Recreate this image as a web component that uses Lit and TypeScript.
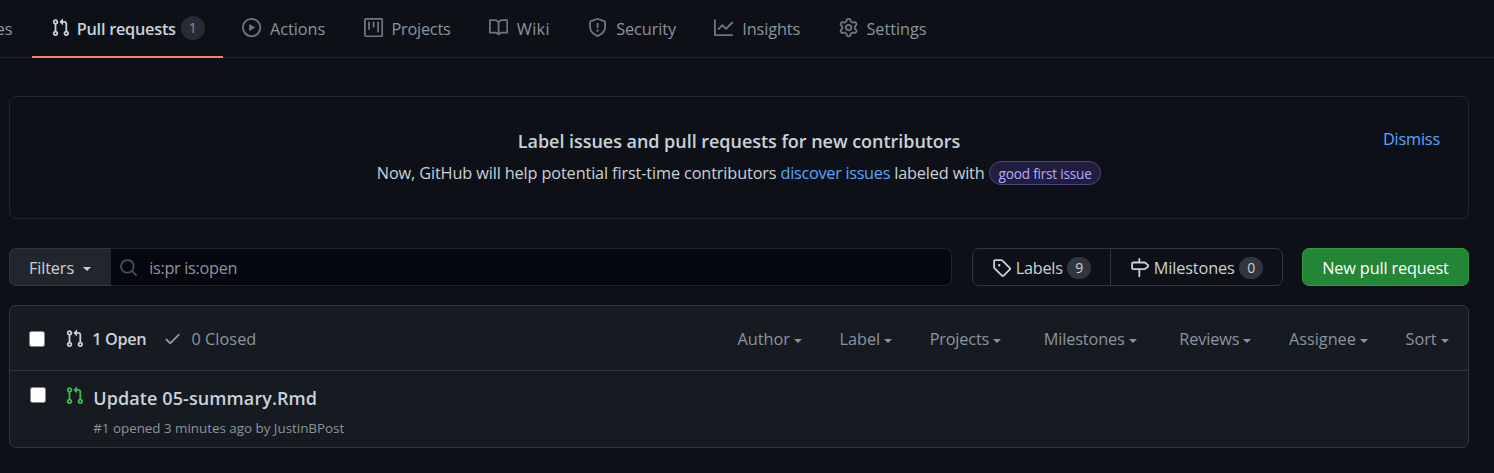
import { LitElement, html, css, svg } from "lit";
import { customElement, property } from "lit/decorators.js";

const ICONS: Record<string, string> = {
  pr: "M7.177 3.073L9.573.677A.25.25 0 0110 .854v4.792a.25.25 0 01-.427.177L7.177 3.427a.25.25 0 010-.354zM3.75 2.5a.75.75 0 100 1.5.75.75 0 000-1.5zm-2.25.75a2.25 2.25 0 113 2.122v5.256a2.251 2.251 0 11-1.5 0V5.372A2.25 2.25 0 011.5 3.25zM11 2.5h-1V4h1a1 1 0 011 1v5.628a2.251 2.251 0 101.5 0V5A2.5 2.5 0 0011 2.5zm1 10.25a.75.75 0 111.5 0 .75.75 0 01-1.5 0zM3.75 12a.75.75 0 100 1.5.75.75 0 000-1.5z",
  play: "M1.5 8a6.5 6.5 0 1113 0 6.5 6.5 0 01-13 0zM8 0a8 8 0 100 16A8 8 0 008 0zM6.379 5.227A.25.25 0 006 5.442v5.117a.25.25 0 00.379.214l4.264-2.559a.25.25 0 000-.428L6.379 5.227z",
  project: "M1.75 0A1.75 1.75 0 000 1.75v12.5C0 15.216.784 16 1.75 16h12.5A1.75 1.75 0 0016 14.25V1.75A1.75 1.75 0 0014.25 0H1.75zM1.5 1.75a.25.25 0 01.25-.25h12.5a.25.25 0 01.25.25v12.5a.25.25 0 01-.25.25H1.75a.25.25 0 01-.25-.25V1.75zM11.75 3a.75.75 0 00-.75.75v7.5a.75.75 0 001.5 0v-7.5a.75.75 0 00-.75-.75zm-8.25.75a.75.75 0 011.5 0v5.5a.75.75 0 01-1.5 0v-5.5zM8 3a.75.75 0 00-.75.75v3.5a.75.75 0 001.5 0v-3.5A.75.75 0 008 3z",
  book: "M0 1.75A.75.75 0 01.75 1h4.253c1.227 0 2.317.59 3 1.501A3.744 3.744 0 0111.006 1h4.245a.75.75 0 01.75.75v10.5a.75.75 0 01-.75.75h-4.507a2.25 2.25 0 00-1.591.659l-.622.621a.75.75 0 01-1.06 0l-.622-.621A2.25 2.25 0 005.258 13H.75a.75.75 0 01-.75-.75V1.75zm8.755 3a2.25 2.25 0 012.25-2.25H14.5v9h-3.757c-.71 0-1.4.201-1.992.572l.004-7.322zm-1.504 7.324l.004-5.073-.002-2.253A2.25 2.25 0 005.003 2.5H1.5v9h3.757a3.75 3.75 0 011.994.574z",
  shield: "M7.467.133a1.75 1.75 0 011.066 0l5.25 1.68A1.75 1.75 0 0115 3.48V7c0 1.566-.32 3.182-1.303 4.682-.983 1.498-2.585 2.813-5.032 3.855a1.7 1.7 0 01-1.33 0c-2.447-1.042-4.049-2.357-5.032-3.855C1.32 10.182 1 8.566 1 7V3.48a1.75 1.75 0 011.217-1.667l5.25-1.68zm.61 1.429a.25.25 0 00-.153 0l-5.25 1.68a.25.25 0 00-.174.238V7c0 1.358.275 2.666 1.057 3.86.784 1.194 2.121 2.34 4.366 3.297a.2.2 0 00.154 0c2.245-.956 3.582-2.104 4.366-3.298C13.225 9.666 13.5 8.36 13.5 7V3.48a.25.25 0 00-.174-.237l-5.25-1.68zM9 10.5a1 1 0 11-2 0 1 1 0 012 0zm-.25-5.75a.75.75 0 10-1.5 0v3a.75.75 0 001.5 0v-3z",
  graph: "M1.5 1.75a.75.75 0 00-1.5 0v12.5c0 .414.336.75.75.75h14.5a.75.75 0 000-1.5H1.5V1.75zm14.28 2.53a.75.75 0 00-1.06-1.06L10 7.94 7.53 5.47a.75.75 0 00-1.06 0L3.22 8.72a.75.75 0 001.06 1.06L7 7.06l2.47 2.47a.75.75 0 001.06 0l5.25-5.25z",
  gear: "M7.429 1.525a6.593 6.593 0 011.142 0c.036.003.108.036.137.146l.289 1.105c.147.56.55.967.997 1.189.174.086.341.183.501.29.417.278.97.423 1.53.27l1.102-.303c.11-.03.175.016.195.046.219.31.41.641.573.989.014.031.022.11-.059.19l-.815.806c-.411.406-.562.957-.53 1.456a4.588 4.588 0 010 .582c-.032.499.119 1.05.53 1.456l.815.806c.08.08.073.159.059.19a6.494 6.494 0 01-.573.99c-.02.029-.086.074-.195.045l-1.103-.303c-.559-.153-1.112-.008-1.529.27-.16.107-.327.204-.5.29-.449.222-.851.628-.998 1.189l-.289 1.105c-.029.11-.101.143-.137.146a6.613 6.613 0 01-1.142 0c-.036-.003-.108-.037-.137-.146l-.289-1.105c-.147-.56-.55-.967-.997-1.189a4.502 4.502 0 01-.501-.29c-.417-.278-.97-.423-1.53-.27l-1.102.303c-.11.03-.175-.016-.195-.046a6.492 6.492 0 01-.573-.989c-.014-.031-.022-.11.059-.19l.815-.806c.411-.406.562-.957.53-1.456a4.587 4.587 0 010-.582c.032-.499-.119-1.05-.53-1.456l-.815-.806c-.08-.08-.073-.159-.059-.19a6.44 6.44 0 01.573-.99c.02-.029.086-.075.195-.045l1.103.303c.559.153 1.112.008 1.529-.27.16-.107.327-.204.5-.29.449-.222.851-.628.998-1.189l.289-1.105c.029-.11.101-.143.137-.146zM8 0c-.236 0-.47.01-.701.03-.743.065-1.29.615-1.458 1.261l-.29 1.106c-.017.066-.078.158-.211.224a5.994 5.994 0 00-.668.386c-.123.082-.233.09-.3.071L3.27 2.776c-.644-.177-1.392.02-1.82.63a7.977 7.977 0 00-.704 1.217c-.315.675-.111 1.422.363 1.891l.815.806c.05.048.098.147.088.294a6.084 6.084 0 000 .772c.01.147-.038.246-.088.294l-.815.806c-.474.469-.678 1.216-.363 1.891.2.428.436.835.704 1.218.428.609 1.176.806 1.82.63l1.103-.303c.066-.019.176-.011.299.071.213.143.436.272.668.386.133.066.194.158.212.224l.289 1.106c.169.646.715 1.196 1.458 1.26a8.094 8.094 0 001.402 0c.743-.064 1.29-.614 1.458-1.26l.29-1.106c.017-.066.078-.158.211-.224a5.98 5.98 0 00.668-.386c.123-.082.233-.09.3-.071l1.102.302c.644.177 1.392-.02 1.82-.63.268-.382.505-.789.704-1.217.315-.675.111-1.422-.364-1.891l-.814-.806c-.05-.048-.098-.147-.088-.294a6.1 6.1 0 000-.772c-.01-.147.039-.246.088-.294l.814-.806c.475-.469.679-1.216.364-1.891a7.992 7.992 0 00-.704-1.218c-.428-.609-1.176-.806-1.82-.63l-1.103.303c-.066.019-.176.011-.299-.071a5.991 5.991 0 00-.668-.386c-.133-.066-.194-.158-.212-.224L10.16 1.29C9.99.645 9.444.095 8.701.031A8.094 8.094 0 008 0zm1.5 8a1.5 1.5 0 11-3 0 1.5 1.5 0 013 0zM11 8a3 3 0 11-6 0 3 3 0 016 0z",
  search: "M11.5 7a4.499 4.499 0 11-8.998 0A4.499 4.499 0 0111.5 7zm-.82 4.74a6 6 0 111.06-1.06l3.04 3.04a.75.75 0 11-1.06 1.06l-3.04-3.04z",
  tag: "M2.5 7.775V2.75a.25.25 0 01.25-.25h5.025a.25.25 0 01.177.073l6.25 6.25a.25.25 0 010 .354l-5.025 5.025a.25.25 0 01-.354 0l-6.25-6.25a.25.25 0 01-.073-.177zm-1.5 0V2.75C1 1.784 1.784 1 2.75 1h5.025c.464 0 .91.184 1.238.513l6.25 6.25a1.75 1.75 0 010 2.474l-5.026 5.026a1.75 1.75 0 01-2.474 0l-6.25-6.25A1.75 1.75 0 011 7.775zM6 5a1 1 0 100 2 1 1 0 000-2z",
  milestone: "M7.75 0a.75.75 0 01.75.75V3h3.634c.414 0 .814.147 1.13.414l2.07 1.75a1.75 1.75 0 010 2.672l-2.07 1.75a1.75 1.75 0 01-1.13.414H8.5v5.25a.75.75 0 11-1.5 0V10H2.75A1.75 1.75 0 011 8.25v-3.5C1 3.784 1.784 3 2.75 3H7V.75A.75.75 0 017.75 0zm0 8.5h4.384a.25.25 0 00.161-.06l2.07-1.75a.25.25 0 000-.38l-2.07-1.75a.25.25 0 00-.161-.06H2.75a.25.25 0 00-.25.25v3.5c0 .138.112.25.25.25h5z",
  check: "M13.78 4.22a.75.75 0 010 1.06l-7.25 7.25a.75.75 0 01-1.06 0L2.22 9.28a.75.75 0 011.06-1.06L6 10.94l6.72-6.72a.75.75 0 011.06 0z",
};

const icon = (name: string) => html`<svg class="icon" viewBox="0 0 16 16" aria-hidden="true">${svg`<path fill-rule="evenodd" d=${ICONS[name]}></path>`}</svg>`;

/** A single line of text, tracked so that it fills exactly `w` pixels. */
@customElement("ui-text")
class UiText extends LitElement {
  @property({ type: Number }) w = 0;
  @property() text = "";

  static styles = css`
    :host { display: block; flex: none; white-space: pre; }
    .run { display: inline-block; }
  `;

  updated() {
    const run = this.renderRoot.querySelector(".run") as HTMLElement;
    run.style.letterSpacing = "0px";
    const natural = run.getBoundingClientRect().width;
    run.style.letterSpacing = `${(this.w - natural) / this.text.length}px`;
    this.style.width = `${this.w}px`;
  }

  render() {
    return html`<span class="run">${this.text}</span>`;
  }
}

const t = (text: string, w: number, cls = "") => html`<ui-text class=${cls} .text=${text} .w=${w}></ui-text>`;

const TABS: [string, string, number][] = [
  ["play", "Actions", 55.2],
  ["project", "Projects", 59],
  ["book", "Wiki", 33.2],
  ["shield", "Security", 59.8],
  ["graph", "Insights", 58],
  ["gear", "Settings", 60],
];

const MENUS: [string, number, string][] = [
  ["Author", 52.5, ""],
  ["Label", 40.5, ""],
  ["Projects", 59.5, ""],
  ["Milestones", 81, "wide"],
  ["Reviews", 60, "wide"],
  ["Assignee", 67, ""],
  ["Sort", 31, ""],
];

@customElement("app-root")
class AppRoot extends LitElement {
  static styles = css`
    :host {
      display: block;
      height: 473px;
      overflow: hidden;
      box-sizing: border-box;
      background: #0d1117;
      color: #c9d1d9;
      font: 400 16.3px/24px "Open Sans", "Noto Sans", sans-serif;
    }
    * { box-sizing: border-box; }
    .icon { display: block; flex: none; width: 19.2px; height: 19.2px; fill: currentColor; }

    .nav { display: flex; height: 58px; border-bottom: 1px solid #21262d; color: #8b949e; }
    .cut { width: 32px; padding: 17px 19.4px 0 0; display: flex; justify-content: flex-end; overflow: hidden; }
    .tab { display: flex; align-items: flex-start; height: 58px; padding: 18px 19.2px 0; gap: 8.7px; }
    .tab ui-text { margin-top: -1px; }
    .tab .icon { color: #6e7681; }
    .tab.on { width: 191px; padding-right: 0; gap: 6.4px; border-bottom: 2px solid #f78166; color: #c9d1d9; font-weight: 600; }
    .tab.on .icon { color: #c9d1d9; }
    .count { display: flex; align-items: center; justify-content: center; width: 24px; height: 22px; border-radius: 12px; background: #30363d; color: #c9d1d9; font-size: 14px; line-height: 22px; font-weight: 400; }
    .tab .count { height: 24px; margin: -2px 0 0 -1.5px; background: #272c33; color: #8b949e; }

    .main { padding: 38px 25px 0 9px; }
    .banner { display: flex; flex-direction: column; align-items: center; position: relative; height: 123px; padding-top: 32px; border: 1px solid #21262d; border-radius: 7px; }
    .title { font-size: 18px; font-weight: 600; }
    .line { display: flex; align-items: center; margin-top: 7px; height: 26px; }
    .link { color: #58a6ff; }
    .pill { display: flex; align-items: center; height: 24px; margin-left: 4px; padding: 1px 8.6px 0 9px; border: 1px solid #4c4580; border-radius: 12px; background: #211d40; color: #b8a9f9; font-size: 13.6px; }
    .dismiss { position: absolute; top: 30px; right: 28px; color: #58a6ff; }

    .tools { display: flex; height: 38px; margin-top: 29px; }
    .tools ui-text { margin-top: 2px; }
    .filters { display: flex; align-items: center; width: 102px; padding-left: 19px; gap: 9px; border: 1px solid #30363d; border-right: 0; border-radius: 7px 0 0 7px; background: #21262d; }
    .caret { flex: none; width: 0; height: 0; margin-top: 3px; border: 4.4px solid transparent; border-top-color: currentColor; border-bottom: 0; }
    .search { display: flex; align-items: center; width: 841px; padding-left: 8px; gap: 11px; border: 1px solid #21262d; border-left: 0; border-radius: 0 7px 7px 0; background: #04070d; color: #8b949e; }
    .search .icon { margin-top: 2px; color: #484f58; }
    .group { display: flex; width: 311px; margin-left: 20px; border: 1px solid #30363d; border-radius: 7px; }
    .seg { display: flex; align-items: center; padding-left: 19px; gap: 4.5px; }
    .seg .icon { margin-top: 2px; }
    .seg .count { margin-top: 2px; }
    .seg:first-child { width: 138px; border-right: 1px solid #30363d; }
    .new { display: flex; align-items: center; justify-content: center; width: 167px; margin-left: 19px; border: 1px solid #2e9a41; border-radius: 7px; background: #238636; color: #fff; }

    .list { margin-top: 19px; height: 143px; border: 1px solid #30363d; border-radius: 7px; background: #161b22; }
    .head { display: flex; align-items: center; height: 65px; padding: 2px 19.5px 0 19px; border-bottom: 1px solid #30363d; color: #8b949e; }
    .box { flex: none; width: 16px; height: 16px; border: 1.5px solid #85858f; border-radius: 2.5px; background: #fff; }
    .head .box { margin-right: 20px; }
    .open { display: flex; align-items: center; gap: 8px; color: #c9d1d9; font-weight: 600; margin-right: 16.5px; }
    .closed { display: flex; align-items: center; gap: 9.5px; }
    .menus { display: flex; margin-left: auto; gap: 37.6px; }
    .menu { display: flex; align-items: center; gap: 4px; }
    .wide { margin-left: 5px; }
    .row { display: flex; padding: 15px 0 0 20px; }
    .row .box { margin-top: 1px; }
    .row .icon { margin: 0 9px 0 19px; color: #3fb950; }
    .name { font-size: 18px; font-weight: 600; line-height: 24px; }
    .meta { margin-top: 6px; font-size: 13.4px; color: #8b949e; }
  `;

  render() {
    return html`
      <nav class="nav">
        <div class="cut">${t("Issues", 47)}</div>
        <div class="tab on">${icon("pr")}${t("Pull requests", 99)}<span class="count">1</span></div>
        ${TABS.map(([i, l, w]) => html`<div class="tab">${icon(i)}${t(l, w)}</div>`)}
      </nav>
      <main class="main">
        <section class="banner">
          ${t("Label issues and pull requests for new contributors", 442.5, "title")}
          <div class="line">
            ${t("Now, GitHub will help potential first-time contributors ", 403.8)}
            ${t("discover issues", 109.5, "link")}
            ${t(" labeled with", 94.5)}
            <span class="pill">${t("good first issue", 93)}</span>
          </div>
          ${t("Dismiss", 57, "dismiss")}
        </section>
        <section class="tools">
          <div class="filters">${t("Filters", 45)}<i class="caret"></i></div>
          <div class="search">${icon("search")}${t("is:pr is:open", 88)}</div>
          <div class="group">
            <div class="seg">${icon("tag")}${t("Labels", 47)}<span class="count">9</span></div>
            <div class="seg">${icon("milestone")}${t("Milestones", 81)}<span class="count">0</span></div>
          </div>
          <div class="new">${t("New pull request", 126.5)}</div>
        </section>
        <section class="list">
          <div class="head">
            <span class="box"></span>
            <div class="open">${icon("pr")}${t("1 Open", 54)}</div>
            <div class="closed">${icon("check")}${t("0 Closed", 65)}</div>
            <div class="menus">
              ${MENUS.map(([l, w, c]) => html`<div class="menu ${c}">${t(l, w)}<i class="caret"></i></div>`)}
            </div>
          </div>
          <div class="row">
            <span class="box"></span>
            ${icon("pr")}
            <div>
              ${t("Update 05-summary.Rmd", 224, "name")}
              ${t("#1 opened 3 minutes ago by JustinBPost", 251, "meta")}
            </div>
          </div>
        </section>
      </main>
    `;
  }
}
